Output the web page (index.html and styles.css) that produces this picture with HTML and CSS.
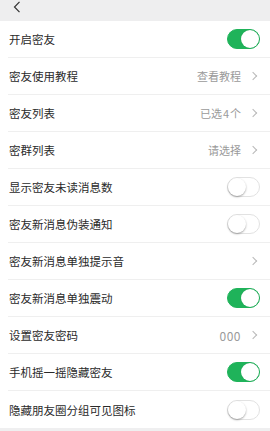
FILE: index.html
```html
<!DOCTYPE html>
<html lang="zh">
<head>
<meta charset="utf-8">
<link rel="stylesheet" href="styles.css">
</head>
<body>
<div class="header">
  <svg class="back" width="8" height="12" viewBox="0 0 8 12"><path d="M6.5 0.8 L1.5 6 L6.5 11.2" fill="none" stroke="#333" stroke-width="1.2"/></svg>
</div>
<div class="list">
  <div class="row"><span class="label">开启密友</span><span class="sw on"></span></div>
  <div class="row"><span class="label">密友使用教程</span><span class="right"><span class="val">查看教程</span><span class="chev"></span></span></div>
  <div class="row"><span class="label">密友列表</span><span class="right"><span class="val">已选<span class="num">4</span>个</span><span class="chev"></span></span></div>
  <div class="row"><span class="label">密群列表</span><span class="right"><span class="val">请选择</span><span class="chev"></span></span></div>
  <div class="row"><span class="label">显示密友未读消息数</span><span class="sw"></span></div>
  <div class="row"><span class="label">密友新消息伪装通知</span><span class="sw"></span></div>
  <div class="row"><span class="label">密友新消息单独提示音</span><span class="right"><span class="chev"></span></span></div>
  <div class="row"><span class="label">密友新消息单独震动</span><span class="sw on"></span></div>
  <div class="row"><span class="label">设置密友密码</span><span class="right"><span class="val digits">000</span><span class="chev"></span></span></div>
  <div class="row"><span class="label">手机摇一摇隐藏密友</span><span class="sw on"></span></div>
  <div class="row last"><span class="label">隐藏朋友圈分组可见图标</span><span class="sw"></span></div>
</div>
</body>
</html>
```
FILE: styles.css
```css
html, body {
  margin: 0;
  padding: 0;
  background: #efeff0;
}
body {
  width: 270px;
  height: 431px;
  overflow: hidden;
  font-family: "Noto Sans CJK SC", "Noto Sans", sans-serif;
}
.header {
  height: 21px;
  background: #eeeeef;
  display: flex;
  align-items: flex-start;
  padding-left: 11px;
  box-sizing: border-box;
  padding-top: 1px;
}
.back {
  display: block;
  margin-left: 2px;
}
.list {
  background: #fff;
}
.row {
  height: 37px;
  box-sizing: border-box;
  margin-left: 8px;
  padding-right: 10px;
  display: flex;
  align-items: center;
  justify-content: space-between;
  border-bottom: 1px solid #efefef;
}
.row.last {
  border-bottom: none;
}
.label {
  font-size: 11.5px;
  color: #2a2a2a;
  margin-left: 1px;
}
.right {
  display: flex;
  align-items: center;
}
.val {
  font-size: 11px;
  color: #9a9a9a;
}
.val.digits {
  font-size: 12px;
  letter-spacing: 0.5px;
}
.num {
  margin: 0 1px;
}
.chev {
  width: 5px;
  height: 5px;
  border-top: 1px solid #b8b8b8;
  border-right: 1px solid #b8b8b8;
  transform: rotate(45deg);
  margin-left: 9px;
  margin-right: 4px;
}
.sw {
  position: relative;
  width: 33px;
  height: 20px;
  border-radius: 10px;
  box-sizing: border-box;
  background: #fff;
  border: 1px solid #e2e2e2;
}
.sw::after {
  content: "";
  position: absolute;
  top: 0;
  left: 0;
  width: 18px;
  height: 18px;
  border-radius: 50%;
  background: #fff;
  box-shadow: 0 1px 2px rgba(0,0,0,0.35);
}
.sw.on {
  background: #1fb35a;
  border-color: #1fb35a;
}
.sw.on::after {
  left: 13px;
  box-shadow: 0 0 1px rgba(0,0,0,0.2);
}
```
